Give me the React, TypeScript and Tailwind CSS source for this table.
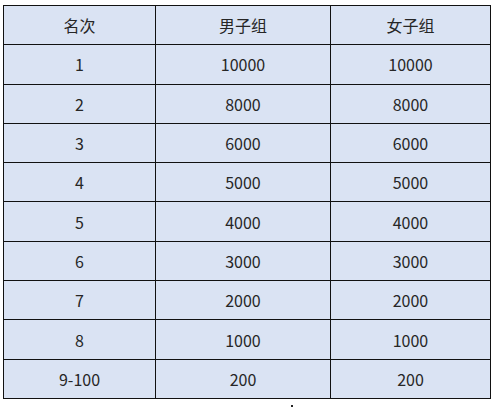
const rows: [string, string, string][] = [
  ['1', '10000', '10000'],
  ['2', '8000', '8000'],
  ['3', '6000', '6000'],
  ['4', '5000', '5000'],
  ['5', '4000', '4000'],
  ['6', '3000', '3000'],
  ['7', '2000', '2000'],
  ['8', '1000', '1000'],
  ['9-100', '200', '200'],
];

export default function App() {
  return (
    <div
      className="w-[491px] h-[409px] bg-white pt-[5px] pl-[3px] text-[#262626]"
      style={{ fontFamily: '"Noto Sans CJK SC", "Noto Sans", sans-serif' }}
    >
      <table className="table-fixed w-[488px] border-collapse bg-[#dae3f3] text-[16px] text-center">
        <colgroup>
          <col className="w-[152px]" />
          <col className="w-[175px]" />
          <col />
        </colgroup>
        <tbody>
          <tr className="h-[39.3px]">
            <td className="border border-[#111] p-0">名次</td>
            <td className="border border-[#111] p-0">男子组</td>
            <td className="border border-[#111] p-0">女子组</td>
          </tr>
          {rows.map((r) => (
            <tr key={r[0]} className="h-[39.3px]">
              <td className="border border-[#111] p-0">{r[0]}</td>
              <td className="border border-[#111] p-0">{r[1]}</td>
              <td className="border border-[#111] p-0">{r[2]}</td>
            </tr>
          ))}
        </tbody>
      </table>
      <div className="ml-[288px] mt-[6px] w-[2px] h-[2px] bg-[#222]" />
    </div>
  );
}
